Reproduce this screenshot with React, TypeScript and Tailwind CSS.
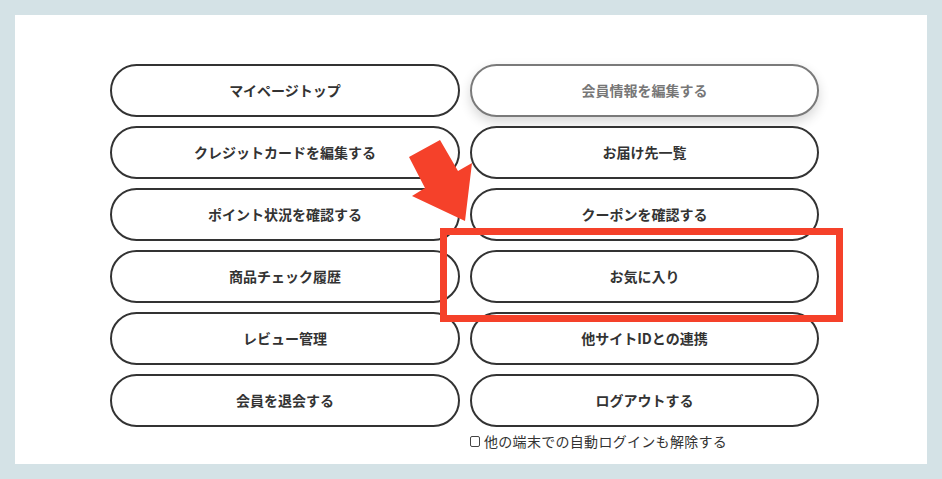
import React from "react";

const leftLinks = [
  "マイページトップ",
  "クレジットカードを編集する",
  "ポイント状況を確認する",
  "商品チェック履歴",
  "レビュー管理",
  "会員を退会する",
];

const rightLinks = [
  "会員情報を編集する",
  "お届け先一覧",
  "クーポンを確認する",
  "お気に入り",
  "他サイトIDとの連携",
  "ログアウトする",
];

const MenuButton = ({ label, hovered }: { label: string; hovered?: boolean }) => (
  <button
    className={
      hovered
        ? "h-[53px] w-full rounded-full border-2 border-[#7a7a7a] bg-white text-[14px] font-bold text-[#777] shadow-[0_5px_12px_rgba(0,0,0,0.16)]"
        : "h-[53px] w-full rounded-full border-2 border-[#333] bg-white text-[14px] font-bold text-[#333]"
    }
  >
    {label}
  </button>
);

const App = () => {
  return (
    <div
      className="h-[479px] w-[942px] bg-[#d4e2e6] p-[15px]"
      style={{ fontFamily: '"Noto Sans CJK JP", "Noto Sans", sans-serif' }}
    >
      <div className="relative h-[449px] w-[912px] bg-white pl-[95px] pt-[49px]">
        <div className="flex gap-[10px]">
          {/* left column */}
          <div className="flex w-[350px] flex-col gap-[9px]">
            {leftLinks.map((l) => (
              <MenuButton key={l} label={l} />
            ))}
          </div>

          {/* right column */}
          <div className="flex w-[349px] flex-col gap-[9px]">
            {rightLinks.map((l, i) => (
              <MenuButton key={l} label={l} hovered={i === 0} />
            ))}
            <label className="-mt-[5px] flex items-center gap-[4px] text-[14px] leading-[20px] tracking-[0.3px] text-[#333]">
              <span className="inline-block h-[11px] w-[10px] rounded-[2px] border border-[#444]" />
              他の端末での自動ログインも解除する
            </label>
          </div>
        </div>

        {/* highlight frame */}
        <div className="absolute left-[425px] top-[213px] h-[94px] w-[403px] border-[7px] border-[#f5412a]" />

        {/* pointer arrow */}
        <svg
          className="absolute left-[370px] top-[100px]"
          width="100"
          height="130"
          viewBox="385 115 100 130"
        >
          <polygon
            points="409,157 440,140 458,171 472,163 465,221 412,196 425,188"
            fill="#f5412a"
          />
        </svg>
      </div>
    </div>
  );
};

export default App;
